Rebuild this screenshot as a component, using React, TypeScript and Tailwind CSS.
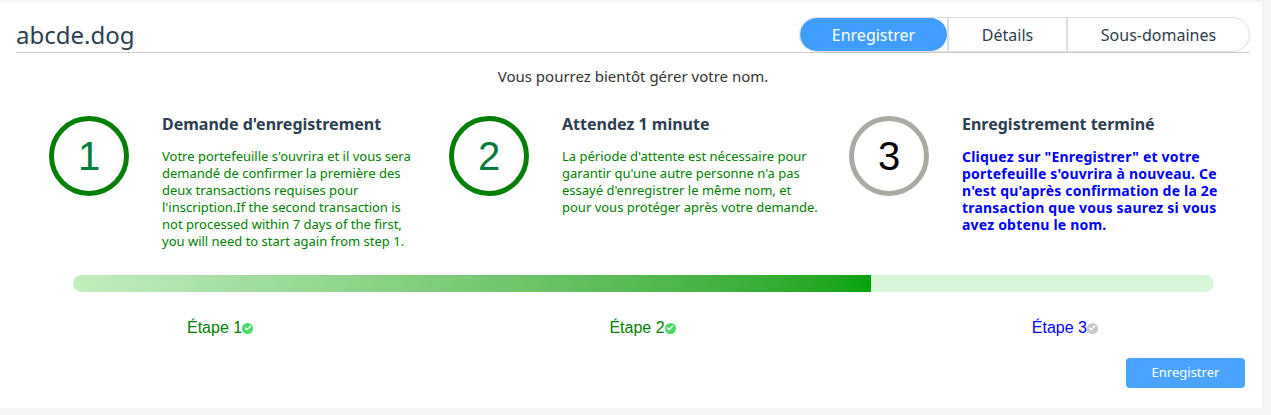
import { Check } from "lucide-react"

const steps = [
  {
    n: "1",
    done: true,
    title: "Demande d'enregistrement",
    lines: [
      "Votre portefeuille s'ouvrira et il vous sera",
      "demandé de confirmer la première des",
      "deux transactions requises pour",
      "l'inscription.If the second transaction is",
      "not processed within 7 days of the first,",
      "you will need to start again from step 1.",
    ],
  },
  {
    n: "2",
    done: true,
    title: "Attendez 1 minute",
    lines: [
      "La période d'attente est nécessaire pour",
      "garantir qu'une autre personne n'a pas",
      "essayé d'enregistrer le même nom, et",
      "pour vous protéger après votre demande.",
    ],
  },
  {
    n: "3",
    done: false,
    title: "Enregistrement terminé",
    lines: [
      "Cliquez sur \"Enregistrer\" et votre",
      "portefeuille s'ouvrira à nouveau. Ce",
      "n'est qu'après confirmation de la 2e",
      "transaction que vous saurez si vous",
      "avez obtenu le nom.",
    ],
  },
]

const CheckDot = ({ done }: { done: boolean }) => (
  <span
    className={
      "inline-flex items-center justify-center w-[11px] h-[11px] rounded-full " +
      (done ? "bg-[#4cd964]" : "bg-[#c8c8c8]")
    }
  >
    <Check className="w-[8px] h-[8px] text-white" strokeWidth={4} />
  </span>
)

const App = () => {
  return (
    <div className="w-[1271px] h-[415px] bg-[#f4f4f4] pt-[2px] font-['Noto_Sans',sans-serif] text-[#2c3e50]">
      <div className="w-[1262px] h-[406px] bg-white pl-4 pr-3">
        <div className="flex items-center justify-between pt-[15px] border-b border-[#cccccc]">
          <h1 className="text-[24px] leading-[35px] text-[#2c3e50]">abcde.dog</h1>
          <div className="flex h-[35px] rounded-full border border-[#dddddd] overflow-hidden text-[16px]">
            <div className="w-[147px] flex items-center justify-center bg-[#409eff] text-white rounded-full">
              Enregistrer
            </div>
            <div className="w-[119px] flex items-center justify-center border-l-2 border-[#dddddd]">Détails</div>
            <div className="w-[183px] flex items-center justify-center border-l-2 border-[#dddddd]">
              Sous-domaines
            </div>
          </div>
        </div>

        <p className="text-center text-[15px] text-[#333333] mt-[13px] leading-[20px]">
          Vous pourrez bientôt gérer votre nom.
        </p>

        <div className="grid grid-cols-[400px_400px_400px] pl-[33px] mt-[30px]">
          {steps.map((s) => (
            <div key={s.n} className="flex">
              <div
                className={
                  "w-20 h-20 shrink-0 rounded-full border-[5px] flex items-center justify-center font-['Liberation_Sans',sans-serif] text-[40px] " +
                  (s.done ? "border-[#008000] text-[#007a3d]" : "border-[#a9aba3] text-black")
                }
              >
                {s.n}
              </div>
              <div className="ml-[33px]">
                <h2 className="text-[16px] font-bold leading-[18px] mt-[-1px]">{s.title}</h2>
                <p
                  className={
                    "mt-[15px] leading-[17px] whitespace-nowrap " +
                    (s.done ? "text-[13px] text-[#008000]" : "text-[14px] tracking-[0.2px] text-[#0000ff] font-bold")
                  }
                >
                  {s.lines.map((l, i) => (
                    <span key={i} className="block">
                      {l}
                    </span>
                  ))}
                </p>
              </div>
            </div>
          ))}
        </div>

        <div className="ml-[57px] w-[1141px] h-[17px] mt-[25px] rounded-full bg-[#d8f7d8] overflow-hidden">
          <div className="h-full w-[798px] bg-gradient-to-r from-[#c1efbf] to-[#04a30c] rounded-l-full" />
        </div>

        <div className="flex justify-between pl-[171px] pr-[152px] mt-[24px] font-['Liberation_Sans',sans-serif] text-[16px]">
          {["1", "2", "3"].map((n) => (
            <div key={n} className={"flex items-center " + (n === "3" ? "text-[#0000ff]" : "text-[#008000]")}>
              Étape {n}
              <CheckDot done={n !== "3"} />
            </div>
          ))}
        </div>

        <div className="flex justify-end pr-[5px] mt-[18px]">
          <button className="w-[119px] h-[30px] rounded-[4px] bg-[#4aa4ff] text-white text-[13px]">
            Enregistrer
          </button>
        </div>
      </div>
    </div>
  )
}

export default App
